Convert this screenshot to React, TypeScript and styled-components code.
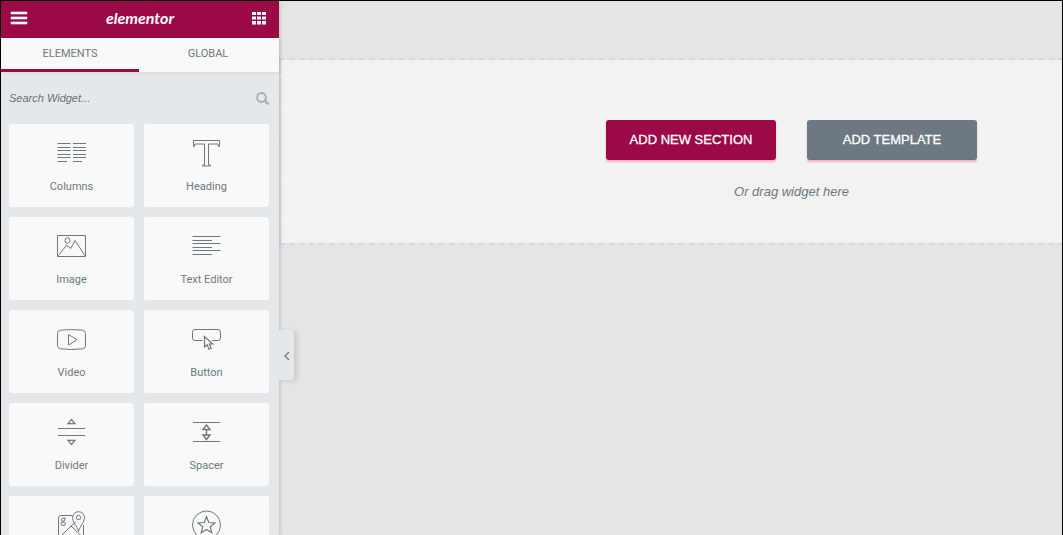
import React from "react";
import styled, { createGlobalStyle } from "styled-components";

const GlobalStyle = createGlobalStyle`
  *, *::before, *::after { box-sizing: border-box; }
  body { margin: 0; background: #e6e6e6; }
  button, input { font: inherit; margin: 0; }
`;

const brand = "#9b0a46";
const slate = "#6d7882";
const ui = `Roboto, "Liberation Sans", sans-serif`;
const plain = `"Liberation Sans", Arial, sans-serif`;

const Frame = styled.div`
  display: flex;
  height: 100vh;
  overflow: hidden;
  border: 1px solid #000;
  border-bottom: 0;
  font-family: ${ui};
  color: ${slate};
`;

const Panel = styled.aside`
  position: relative;
  z-index: 1;
  flex: 0 0 278px;
  display: flex;
  flex-direction: column;
  background: #e4e8eb;
  box-shadow: 0 0 5px rgba(0, 0, 0, 0.25);
`;

const Header = styled.header`
  flex: none;
  display: flex;
  align-items: center;
  justify-content: space-between;
  height: 37px;
  padding: 0 13px 3px 9px;
  background: ${brand};
`;

const IconButton = styled.button`
  display: flex;
  padding: 0;
  border: 0;
  background: none;
  color: inherit;
  cursor: pointer;
`;

const HeaderButton = styled(IconButton)`
  color: #fff;
`;

const Logo = styled.span`
  font: italic 700 16px/20px Lato, sans-serif;
  color: #fff;
`;

const Tabs = styled.nav`
  flex: none;
  display: flex;
  padding-right: 2px;
  background: #f9f9f9;
  box-shadow: 0 1px 4px rgba(0, 0, 0, 0.08);
`;

const Tab = styled.button<{ $active?: boolean }>`
  flex: 1;
  height: 34px;
  padding: 0;
  border: 0;
  border-bottom: 3px solid ${(p) => (p.$active ? brand : "transparent")};
  background: none;
  color: ${slate};
  font-size: 11px;
  line-height: 16px;
  text-transform: uppercase;
  cursor: pointer;
`;

const Search = styled.label`
  flex: none;
  display: flex;
  align-items: center;
  height: 52px;
  padding: 0 10px 0 8px;
  color: #a4afb7;
`;

const SearchInput = styled.input`
  flex: 1;
  min-width: 0;
  padding: 0;
  border: 0;
  outline: 0;
  background: none;
  font: italic 11px/16px ${plain};
  color: ${slate};
  &::placeholder {
    color: #6b6f74;
    opacity: 1;
  }
`;

const WidgetGrid = styled.div`
  flex: 1;
  min-height: 0;
  overflow: hidden;
  display: grid;
  grid-template-columns: 1fr 1fr;
  grid-auto-rows: 83px;
  gap: 10px;
  padding: 0 10px 0 8px;
`;

const Widget = styled.button`
  display: flex;
  flex-direction: column;
  align-items: center;
  gap: 11px;
  padding: 14px 0 0;
  border: 0;
  border-radius: 3px;
  background: #f9f9f9;
  color: ${slate};
  font-size: 11px;
  line-height: 16px;
  cursor: grab;
`;

const Collapse = styled(IconButton)`
  position: absolute;
  left: 100%;
  top: 329px;
  width: 15px;
  height: 50px;
  padding-top: 2px;
  align-items: center;
  justify-content: center;
  border-radius: 0 3px 3px 0;
  background: #e4e8eb;
  box-shadow: 3px 1px 5px rgba(0, 0, 0, 0.12);
`;

const Canvas = styled.main`
  flex: 1;
  min-width: 0;
  overflow: hidden;
  padding-top: 57px;
  background: #e5e5e5;
`;

const DropArea = styled.section`
  min-width: 1025px;
  display: flex;
  flex-direction: column;
  align-items: center;
  padding: 60px 0 42px;
  border: 2px dashed #d5dadf;
  background: #f2f2f2 padding-box;
`;

const Actions = styled.div`
  display: flex;
  gap: 31px;
`;

const Action = styled.button<{ $tone: string }>`
  width: 170px;
  height: 40px;
  padding: 0;
  border: 0;
  border-radius: 3px;
  background: ${(p) => p.$tone};
  box-shadow: 0 2px 2px rgba(245, 80, 140, 0.4);
  color: #fff;
  font: 500 14px/20px ${ui};
  text-transform: uppercase;
  cursor: pointer;
`;

const Hint = styled.p`
  margin: 23px 0 0;
  font: italic 13px/18px ${plain};
  color: ${slate};
`;

const PlainAction = styled(Action)`
  font: 13px/20px ${plain};
  -webkit-text-stroke: 0.3px currentColor;
`;

const Glyph = ({ children }: { children: React.ReactNode }) => (
  <svg width="29" height="30" viewBox="0 0 29 30" fill="none" stroke="currentColor" aria-hidden="true">
    {children}
  </svg>
);

const widgets: { name: string; icon: React.ReactNode }[] = [
  {
    name: "Columns",
    icon: <path d="M.5 5.5h13M16 5.5h13M.5 9.5h13M16 9.5h13M.5 12.5h13M16 12.5h13M.5 16.5h13M16 16.5h13M.5 19.5h13M16 19.5h13M.5 23.5h9.500M16 23.5h9" />,
  },
  {
    name: "Heading",
    icon: <path d="M1.500 2.500h26v6h-1l-.5-2.500h-9.500v21h2v1h-8v-1h2v-21h-9.500l-.5 2.500h-1z" />,
  },
  {
    name: "Image",
    icon: (
      <>
        <path d="M.5 4.500h28v21H.5zM1 25l8.700-11 4 3.500L18 9.500l10.200 15.500" />
        <ellipse cx="10.500" cy="9.500" rx="2.500" ry="2.800" />
      </>
    ),
  },
  {
    name: "Text Editor",
    icon: <path d="M.5 5.500h28M.5 9.500h19.500M.5 12.500h28M.5 16.500h19.500M.5 19.500h28M.5 23.500h19.500" />,
  },
  {
    name: "Video",
    icon: <path d="M3.500 6.200Q14.500 4.800 25.500 6.200Q28.500 6.500 28.500 9.500V21.500Q28.500 24.500 25.500 24.800Q14.500 26.200 3.500 24.800Q.5 24.500 .5 21.500V9.500Q.5 6.500 3.500 6.200zM11.500 10.500V21L20 15.700z" />,
  },
  {
    name: "Button",
    icon: (
      <>
        <path d="M10.500 16.500H3Q.5 16.500 .5 14V8Q.5 5.500 3 5.500H26Q28.500 5.500 28.500 8V14Q28.500 16.500 26 16.500H20" />
        <path d="M12.500 12.500V23l2.600-2.200 1.900 4.400 2.200-1-1.900-4.200h3.500z" strokeWidth="1.200" />
      </>
    ),
  },
  {
    name: "Divider",
    icon: (
      <>
        <path d="M1 11.500h27M1 18.500h27" />
        <path d="M14.500 2.500l3.500 4.200h-7zM14.500 27.500l3.500-4.200h-7z" strokeWidth="1.200" />
      </>
    ),
  },
  {
    name: "Spacer",
    icon: (
      <>
        <path d="M1 5.500h27M1 24.500h27" />
        <path d="M14.500 8l3.500 4.500h-7zM14.500 22.500l3.500-4.500h-7zM14.500 12.500v5.500" strokeWidth="1.400" />
      </>
    ),
  },
  {
    name: "Google Maps",
    icon: (
      <>
        <path d="M15.500 5.500H4Q1.500 5.500 1.500 8V26Q1.500 28.500 4 28.500H24Q26.500 28.500 26.500 26V15M3 27L14 16 26 27.500M14 16l4.500-4" />
        <path d="M21.500 21.500C20 16 15.500 12 15.500 7.700a6 6 0 0 1 12 0C27.500 12 23 16 21.500 21.500z" />
        <circle cx="21.500" cy="7.500" r="2.200" />
        <ellipse cx="6" cy="9.700" rx="1.700" ry="1.600" />
        <ellipse cx="6.200" cy="13.800" rx="2.200" ry="1.800" />
        <path d="M7 8.200h2M6.500 11.300l1 1" />
      </>
    ),
  },
  {
    name: "Icon",
    icon: (
      <>
        <circle cx="14.500" cy="15" r="14" />
        <path d="M14.500 6.800l2.300 5.700 6.200.4-4.800 3.900 1.600 6-5.300-3.300-5.300 3.300 1.600-6L6 12.900l6.200-.4z" strokeWidth="1.200" />
      </>
    ),
  },
];

export default function App() {
  return (
    <Frame>
      <GlobalStyle />
      <Panel>
        <Header>
          <HeaderButton aria-label="Menu">
            <svg width="18" height="14" viewBox="0 0 18 14" fill="currentColor">
              <path d="M1 1h16v2H1zM1 6h16v2H1zM1 11h16v2H1z" stroke="currentColor" strokeWidth=".6" strokeLinejoin="round" />
            </svg>
          </HeaderButton>
          <Logo>elementor</Logo>
          <HeaderButton aria-label="Widgets">
            <svg width="14" height="14" viewBox="0 0 14 14" fill="currentColor">
              <path d="M0 1h4v3H0zM5 1h4v3H5zM10 1h4v3h-4zM0 5.500h4v3H0zM5 5.500h4v3H5zM10 5.500h4v3h-4zM0 10h4v3.500H0zM5 10h4v3.500H5zM10 10h4v3.500h-4z" />
            </svg>
          </HeaderButton>
        </Header>
        <Tabs>
          <Tab $active>Elements</Tab>
          <Tab>Global</Tab>
        </Tabs>
        <Search>
          <SearchInput type="text" placeholder="Search Widget..." aria-label="Search Widget" />
          <svg width="13" height="13" viewBox="0 0 13 13" fill="none" stroke="currentColor" strokeWidth="2" aria-hidden="true">
            <circle cx="5.500" cy="5.500" r="4.400" />
            <path d="M8.700 8.700l3.600 3.600" strokeWidth="2.400" />
          </svg>
        </Search>
        <WidgetGrid>
          {widgets.map((w) => (
            <Widget key={w.name}>
              <Glyph>{w.icon}</Glyph>
              {w.name}
            </Widget>
          ))}
        </WidgetGrid>
        <Collapse aria-label="Collapse panel">
          <svg width="6" height="10" viewBox="0 0 6 10" fill="none" stroke="currentColor" strokeWidth="1.300">
            <path d="M5 1L1 5l4 4" />
          </svg>
        </Collapse>
      </Panel>
      <Canvas>
        <DropArea>
          <Actions>
            <PlainAction $tone={brand}>Add New Section</PlainAction>
            <PlainAction $tone={slate}>Add Template</PlainAction>
          </Actions>
          <Hint>Or drag widget here</Hint>
        </DropArea>
      </Canvas>
    </Frame>
  );
}
